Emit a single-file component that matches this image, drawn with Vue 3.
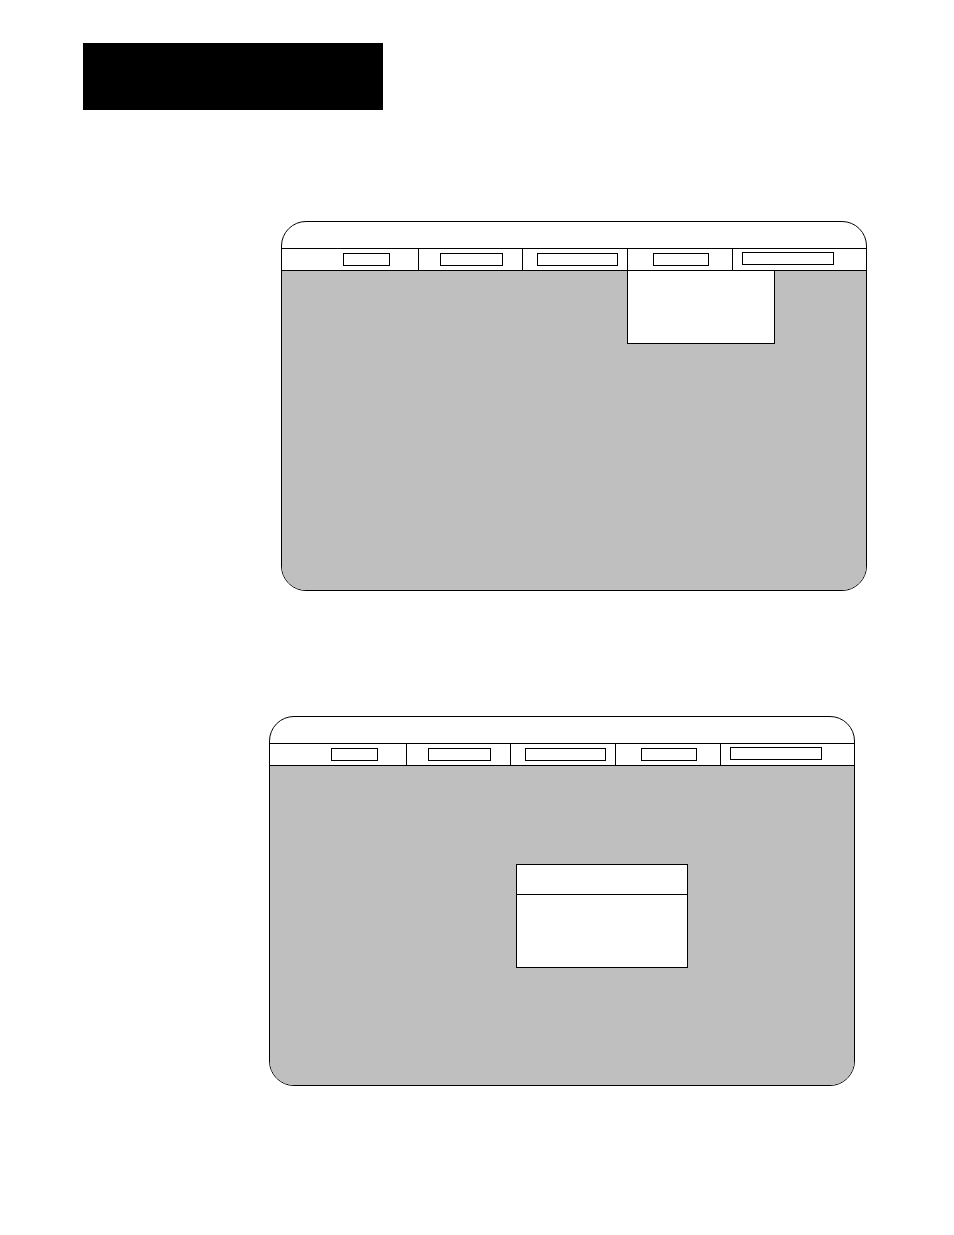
<template>
  <main class="page">
    <header class="banner"></header>

    <section v-for="screen in screens" :key="screen.id" class="screen" :class="screen.id">
      <div class="title-bar"></div>

      <nav class="menu-bar">
        <div v-for="menu in menus" :key="menu" class="menu-cell" :class="menu">
          <button class="menu-button" type="button" :aria-label="menu"></button>
          <div v-if="screen.openMenu === menu" class="dropdown"></div>
        </div>
      </nav>

      <div class="workspace">
        <div v-if="screen.hasDialog" class="dialog">
          <div class="dialog-header"></div>
          <div class="dialog-body"></div>
        </div>
      </div>
    </section>
  </main>
</template>

<script setup>
const menus = ['first', 'second', 'third', 'fourth', 'fifth'];

const screens = [
  { id: 'menu-screen', openMenu: 'fourth', hasDialog: false },
  { id: 'dialog-screen', openMenu: null, hasDialog: true }
];
</script>

<style>
body {
  margin: 0;
  background: #ffffff;
}
</style>

<style scoped>
.page {
  box-sizing: border-box;
  padding: 43px 87px 149px 83px;
  font-family: "Liberation Sans", Arial, sans-serif;
}

.banner {
  max-width: 300px;
  height: 67px;
  margin-bottom: 111px;
  background: #000000;
}

.screen {
  border: 1px solid #000000;
  border-radius: 25px;
  background: #ffffff;
  overflow: hidden;
}

.menu-screen {
  margin-left: 198px;
  margin-bottom: 125px;
}

.dialog-screen {
  margin-left: 186px;
  margin-right: 12px;
}

.title-bar {
  height: 26px;
  border-bottom: 1px solid #000000;
}

.menu-bar {
  display: grid;
  grid-template-columns: 137fr 104fr 105fr 105fr 133fr;
  height: 21px;
  border-bottom: 1px solid #000000;
}

.menu-cell {
  position: relative;
  display: flex;
  align-items: flex-start;
  padding-top: 4px;
  border-right: 1px solid #000000;
}

.menu-button {
  flex: 1;
  min-width: 0;
  height: 13px;
  padding: 0;
  border: 1px solid #000000;
  border-radius: 0;
  background: #ffffff;
  cursor: pointer;
}

.first {
  padding-left: 61px;
  padding-right: 28px;
}

.second {
  padding-left: 21px;
  padding-right: 19px;
}

.third {
  padding-left: 14px;
  padding-right: 9px;
}

.fourth {
  padding-left: 25px;
  padding-right: 23px;
}

.fifth {
  padding-top: 3px;
  padding-left: 9px;
  padding-right: 32px;
  border-right: none;
}

.dropdown {
  position: absolute;
  top: 100%;
  left: -1px;
  box-sizing: border-box;
  width: 148px;
  height: 74px;
  border: 1px solid #000000;
  background: #ffffff;
}

.workspace {
  display: flex;
  align-items: flex-start;
  min-height: 319px;
  background: #bfbfbf;
}

.dialog {
  width: 170px;
  margin-top: 98px;
  margin-left: 246px;
  border: 1px solid #000000;
  background: #ffffff;
}

.dialog-header {
  height: 29px;
  border-bottom: 1px solid #000000;
}

.dialog-body {
  height: 72px;
}
</style>
